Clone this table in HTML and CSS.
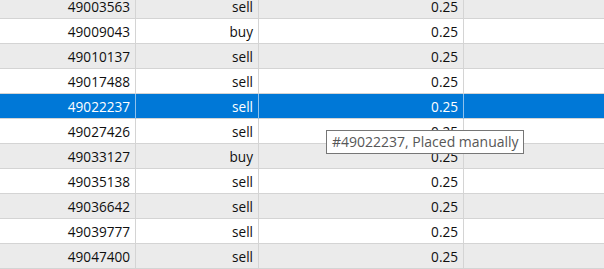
FILE: index.html
```html
<!DOCTYPE html>
<html>
<head>
<meta charset="utf-8">
<link rel="stylesheet" href="styles.css">
</head>
<body>
<div class="grid">
  <div class="row alt"><div class="cell">49003563</div><div class="cell">sell</div><div class="cell">0.25</div><div class="cell last"></div></div>
  <div class="row"><div class="cell">49009043</div><div class="cell">buy</div><div class="cell">0.25</div><div class="cell last"></div></div>
  <div class="row alt"><div class="cell">49010137</div><div class="cell">sell</div><div class="cell">0.25</div><div class="cell last"></div></div>
  <div class="row"><div class="cell">49017488</div><div class="cell">sell</div><div class="cell">0.25</div><div class="cell last"></div></div>
  <div class="row selected"><div class="cell">49022237</div><div class="cell">sell</div><div class="cell">0.25</div><div class="cell last"></div></div>
  <div class="row"><div class="cell">49027426</div><div class="cell">sell</div><div class="cell">0.25</div><div class="cell last"></div></div>
  <div class="row alt"><div class="cell">49033127</div><div class="cell">buy</div><div class="cell">0.25</div><div class="cell last"></div></div>
  <div class="row"><div class="cell">49035138</div><div class="cell">sell</div><div class="cell">0.25</div><div class="cell last"></div></div>
  <div class="row alt"><div class="cell">49036642</div><div class="cell">sell</div><div class="cell">0.25</div><div class="cell last"></div></div>
  <div class="row"><div class="cell">49039777</div><div class="cell">sell</div><div class="cell">0.25</div><div class="cell last"></div></div>
  <div class="row alt"><div class="cell">49047400</div><div class="cell">sell</div><div class="cell">0.25</div><div class="cell last"></div></div>
</div>
<div class="tooltip">#49022237, Placed manually</div>
</body>
</html>
```
FILE: styles.css
```css
html, body {
  margin: 0;
  padding: 0;
  background: #ffffff;
  overflow: hidden;
}
body {
  font-family: "Open Sans", "Noto Sans", sans-serif;
  font-size: 13.6px;
  color: #0f0f0f;
}
.grid {
  margin-top: -6px;
}
.row {
  display: grid;
  grid-template-columns: 136px 123px 205px 1fr;
  height: 25px;
  box-sizing: border-box;
  border-bottom: 1px solid #d4d4d4;
  background: #ffffff;
}
.row.alt {
  background: #ebebeb;
}
.row.selected {
  background: #0078d7;
  color: #ffffff;
}
.cell {
  box-sizing: border-box;
  border-right: 1px solid #d4d4d4;
  text-align: right;
  padding-right: 5px;
  line-height: 25px;
  white-space: nowrap;
}
.row.selected .cell {
  border-right-color: #8fc1ec;
}
.cell.last {
  border-right: none;
}
.tooltip {
  position: absolute;
  left: 326px;
  top: 130px;
  width: 198px;
  height: 24px;
  box-sizing: border-box;
  padding: 0 0 0 5px;
  background: #ffffff;
  border: 1px solid #767676;
  color: #575757;
  font-size: 14px;
  line-height: 22px;
  white-space: nowrap;
}
```
